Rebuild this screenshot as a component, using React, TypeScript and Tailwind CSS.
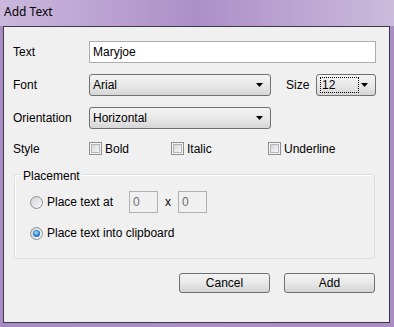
import type { ReactNode } from 'react'

const font = { fontFamily: '"Liberation Sans", Arial, sans-serif' }

function Combo({ value, width, focused = false }: { value: string; width: string; focused?: boolean }) {
  return (
    <div
      className={`${width} h-[22px] flex items-center justify-between rounded-[3px] border border-[#707070] bg-gradient-to-b from-[#f4f4f4] via-[#e9e9e9] to-[#d6d6d6] pl-[3px] pr-[7px]`}
    >
      {focused ? (
        <span className="flex h-[16px] w-[39px] items-center border border-dotted border-black pl-[1px] text-black">
          {value}
        </span>
      ) : (
        <span className="text-black">{value}</span>
      )}
      <svg width="7" height="4" viewBox="0 0 7 4">
        <path d="M0 0h7L3.5 4z" fill="#000" />
      </svg>
    </div>
  )
}

function Check({ label }: { label: string }) {
  return (
    <div className="flex items-center gap-[3px]">
      <div className="h-[13px] w-[13px] border border-[#8e8f8f] bg-[#f4f4f4] p-[1px]">
        <div className="h-full w-full border border-[#b4b6b8] bg-gradient-to-br from-[#d4d6d8] to-[#f7f7f7]" />
      </div>
      <span className="text-black">{label}</span>
    </div>
  )
}

function Radio({ checked = false, children }: { checked?: boolean; children: ReactNode }) {
  return (
    <div className="flex items-center gap-[4px]">
      <div className="flex h-[13px] w-[13px] items-center justify-center rounded-full border border-[#8e8f8f] bg-gradient-to-br from-[#cfd1d3] to-[#fafafa]">
        {checked && (
          <div className="h-[7px] w-[7px] rounded-full bg-[radial-gradient(circle_at_45%_40%,#a9e0ff_0%,#3b8fd6_45%,#0c3f7c_100%)]" />
        )}
      </div>
      {children}
    </div>
  )
}

function Button({ label }: { label: string }) {
  return (
    <div className="flex h-[20px] w-[91px] items-center justify-center rounded-[3px] border border-[#707070] bg-gradient-to-b from-[#f3f3f3] via-[#e8e8e8] to-[#d3d3d3] text-black">
      {label}
    </div>
  )
}

export default function App() {
  return (
    <div className="flex h-[327px] w-[394px] flex-col bg-gradient-to-r from-[#a88cc4] via-[#ab8fc6] to-[#a98dc3] pb-[4px] pl-[3px] pr-[4px]">
      <div className="-ml-[3px] -mr-[4px] flex h-[26px] items-start bg-gradient-to-r from-[#cbb8dd] via-[#ad8fc7] to-[#cbbbdc] pl-[4px] pt-[3px]">
        <span className="text-[12px] text-black" style={{ fontFamily: '"Noto Sans", "Open Sans", sans-serif' }}>
          Add Text
        </span>
      </div>
      <div className="flex flex-1 flex-col border border-[#3d3848] bg-[#f0f0f0] text-[12px]" style={font}>
        <div className="mt-[14px] flex h-[22px] items-center pl-[9px]">
          <span className="w-[76px] text-black">Text</span>
          <div className="flex h-[22px] w-[287px] items-center border border-[#abadb3] bg-white pl-[3px] text-black">
            Maryjoe
          </div>
        </div>
        <div className="mt-[11px] flex h-[22px] items-center pl-[9px]">
          <span className="w-[76px] text-black">Font</span>
          <Combo value="Arial" width="w-[182px]" />
          <span className="ml-[15px] w-[30px] text-black">Size</span>
          <Combo value="12" width="w-[60px]" focused />
        </div>
        <div className="mt-[11px] flex h-[22px] items-center pl-[9px]">
          <span className="w-[76px] text-black">Orientation</span>
          <Combo value="Horizontal" width="w-[182px]" />
        </div>
        <div className="mt-[13px] flex h-[13px] items-center pl-[9px]">
          <span className="w-[76px] text-black">Style</span>
          <div className="w-[82px]">
            <Check label="Bold" />
          </div>
          <div className="w-[97px]">
            <Check label="Italic" />
          </div>
          <Check label="Underline" />
        </div>
        <div className="relative ml-[10px] mt-[19px] h-[85px] w-[361px] rounded-[3px] border border-[#d5dfe5] shadow-[inset_1px_1px_0_#ffffff]">
          <span className="absolute -top-[8px] left-[6px] bg-[#f0f0f0] px-[2px] text-black">Placement</span>
          <div className="ml-[15px] mt-[16px] flex h-[22px] items-center">
            <div className="w-[99px]">
              <Radio>
                <span className="text-black">Place text at</span>
              </Radio>
            </div>
            <div className="flex h-[22px] w-[29px] items-center border border-[#adb2b5] pl-[3px] text-[#6d6d6d]">0</div>
            <span className="w-[20px] text-center text-black">x</span>
            <div className="flex h-[22px] w-[29px] items-center border border-[#adb2b5] pl-[3px] text-[#6d6d6d]">0</div>
          </div>
          <div className="ml-[15px] mt-[13px] flex h-[14px] items-center">
            <Radio checked>
              <span className="text-black">Place text into clipboard</span>
            </Radio>
          </div>
        </div>
        <div className="mt-[14px] flex gap-[14px] pl-[175px]">
          <Button label="Cancel" />
          <Button label="Add" />
        </div>
      </div>
    </div>
  )
}
